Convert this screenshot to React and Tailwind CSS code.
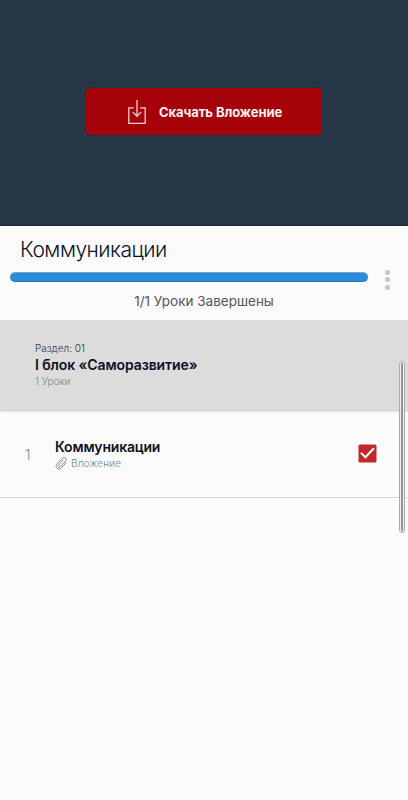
const FONT = 'font-["Inter","Noto_Sans",sans-serif]';

function DownloadIcon() {
  return (
    <svg width="20" height="26" viewBox="0 0 20 26" fill="none" stroke="#f3cfd0" strokeWidth="1.3">
      <path d="M6.8 8.9H1.8v15.4h16.4V8.9h-5" />
      <path d="M10 1v16.3M5.8 13l4.2 4.3 4.2-4.3" />
    </svg>
  );
}

function ClipIcon() {
  return (
    <svg width="13" height="13" viewBox="0 0 13 13" fill="none" stroke="#6f7474" strokeWidth="0.75" strokeLinecap="round">
      <path
        transform="rotate(43 6.5 6.5)"
        d="M9.4 3.2v7a2.9 2.9 0 0 1-5.8 0V1.9a2.1 2.1 0 0 1 4.2 0v7.7a1.2 1.2 0 0 1-2.4 0V3.2"
      />
    </svg>
  );
}

function Hero() {
  return (
    <div className="flex h-[226px] items-start justify-center border-b border-[#1b2938] bg-[#273748] pt-[87px]">
      <button className="flex h-[49px] w-[238px] items-center rounded-[5px] border border-[#183549] bg-[#a50309] pl-[41px]">
        <DownloadIcon />
        <span className="ml-3 whitespace-nowrap text-[13px] font-bold leading-5 tracking-[-0.08px] text-[#fbf1f1]">Скачать Вложение</span>
      </button>
    </div>
  );
}

function CourseHeader() {
  return (
    <div className="h-[94px] pt-2">
      <h1 className="pl-5 text-[21px] font-light leading-8 tracking-[-0.5px] text-[#0b1022]">Коммуникации</h1>
      <div className="mt-[2px] flex h-6 items-center pl-[10px]">
        <div className="-mt-[6px] h-[10px] w-[358px] rounded-full border-y border-t-[#65a9dc] border-b-[#1679c5] bg-[#2f8bd8]" />
        <div className="-mt-px ml-[17px] flex flex-col gap-[2.5px]">
          <span className="size-[5px] rounded-full bg-[#c5c5c7]" />
          <span className="size-[5px] rounded-full bg-[#c5c5c7]" />
          <span className="size-[5px] rounded-full bg-[#c5c5c7]" />
        </div>
      </div>
      <p className="-mt-px text-center text-[13.5px] leading-5 text-[#55565a]">1/1 Уроки Завершены</p>
    </div>
  );
}

function Section() {
  return (
    <div className="h-[91px] border-b border-[#d2d2d2] bg-[#dcdcdc] pl-[35px] pt-[22px] shadow-[0_1px_2px_#00000018]">
      <p className="text-[10px] font-light leading-[13px] text-[#30353d]">Раздел: 01</p>
      <h2 className="text-[14px] font-semibold leading-[19px] tracking-[-0.1px] text-[#0b1022]">I блок «Саморазвитие»</h2>
      <p className="text-[10px] font-light leading-[14px] text-[#708986]">1 Уроки</p>
    </div>
  );
}

function Lesson() {
  return (
    <div className="flex h-[87px] items-center border-b border-[#d6d6d6]">
      <span className="w-[55px] pl-[25px] text-[14px] font-light text-[#78918d]">1</span>
      <div className="flex-1">
        <h3 className="text-[14px] font-semibold leading-[18px] tracking-[-0.2px] text-[#0b1022]">Коммуникации</h3>
        <div className="flex items-center gap-[3px] text-[10px] font-light leading-[14px] tracking-[0.2px] text-[#708986]">
          <ClipIcon />
          <span>Вложение</span>
        </div>
      </div>
      <svg className="-mt-[2px] mr-[31px]" width="19" height="19" viewBox="0 0 19 19">
        <rect x=".5" y=".5" width="18" height="18" rx="1.5" fill="#c1272d" />
        <path d="m3 8.9 4.4 4.3 8.5-9" fill="none" stroke="#fff" strokeWidth="2" />
      </svg>
    </div>
  );
}

export default function App() {
  return (
    <div className={`relative h-[800px] w-[408px] overflow-hidden bg-[#fbfbfb] ${FONT}`}>
      <Hero />
      <CourseHeader />
      <Section />
      <Lesson />
      {/* Scrollbar thumb */}
      <div className="absolute left-[399px] top-[361px] h-[172px] w-[6px] rounded-full border border-[#a9abad] bg-[#efefef] p-px">
        <div className="size-full rounded-full bg-[#929497]" />
      </div>
    </div>
  );
}
